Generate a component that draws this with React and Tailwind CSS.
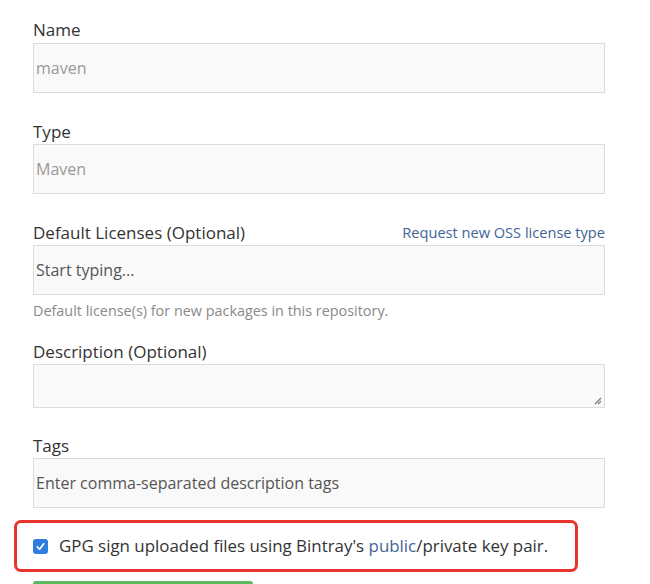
import React from 'react';

const font = { fontFamily: '"Open Sans", "Noto Sans", sans-serif' };

const Label = ({ children, right }) => (
    <div className="flex items-end justify-between h-[25px] text-[17px] leading-[25px] text-[#333]">
        <span>{children}</span>
        {right}
    </div>
);

const Field = ({ value, muted }) => (
    <div
        className={`h-[50px] border border-[#dcdcdc] bg-[#f9f9f9] flex items-center pl-[2px] text-[16px] ${
            muted ? 'text-[#9a9a9a]' : 'text-[#555]'
        }`}
    >
        {value}
    </div>
);

export default function App() {
    return (
        <div className="w-[650px] h-[584px] bg-white overflow-hidden" style={font}>
            <div className="px-[33px] pt-[17px] w-[638px]">
                <Label>Name</Label>
                <div className="mt-[1px]">
                    <Field value="maven" muted />
                </div>

                <div className="mt-[26px]">
                    <Label>Type</Label>
                    <Field value="Maven" muted />
                </div>

                <div className="mt-[26px]">
                    <Label
                        right={<a className="text-[14.6px] text-[#3f6596]">Request new OSS license type</a>}
                    >
                        Default Licenses (Optional)
                    </Label>
                    <Field value="Start typing..." />
                    <p className="text-[14.4px] leading-[20px] text-[#8a8a8a] mt-[6px]">
                        Default license(s) for new packages in this repository.
                    </p>
                </div>

                <div className="mt-[18px]">
                    <Label>Description (Optional)</Label>
                    <div className="relative h-[44px] border border-[#dcdcdc] bg-[#f9f9f9]">
                        <svg className="absolute right-[2px] bottom-[2px]" width="9" height="9" viewBox="0 0 9 9">
                            <path d="M8 2L2 8M8 5L5 8" stroke="#777" strokeWidth="1.2" />
                        </svg>
                    </div>
                </div>

                <div className="mt-[25px]">
                    <Label>Tags</Label>
                    <Field value="Enter comma-separated description tags" />
                </div>
            </div>

            <div className="ml-[14px] mt-[12px] w-[564px] h-[52px] border-[3px] border-[#e8322c] rounded-[7px] flex items-center pl-[16px]">
                <span className="w-[15px] h-[15px] rounded-[3px] bg-[#2f7de1] flex items-center justify-center">
                    <svg width="11" height="11" viewBox="0 0 12 12">
                        <path d="M2.5 6.5L5 9L9.5 3" stroke="white" strokeWidth="1.8" fill="none" strokeLinecap="round" strokeLinejoin="round" />
                    </svg>
                </span>
                <span className="ml-[11px] text-[16.9px] text-[#333]">
                    GPG sign uploaded files using Bintray's <a className="text-[#3f6596]">public</a>/private key pair.
                </span>
            </div>

            <div className="ml-[33px] mt-[9px] w-[220px] h-[10px] bg-[#5cb85c] rounded-t-[3px]" />
        </div>
    );
}
